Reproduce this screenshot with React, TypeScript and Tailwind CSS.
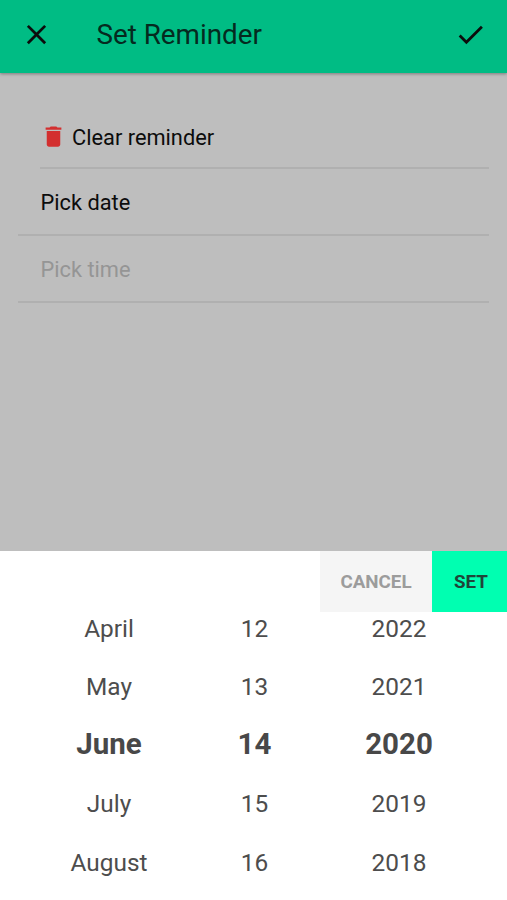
import React from 'react'

interface PickerColumnProps {
  values: string[]
  className: string
}

const SELECTED_INDEX = 2

const months = ['April', 'May', 'June', 'July', 'August']
const days = ['12', '13', '14', '15', '16']
const years = ['2022', '2021', '2020', '2019', '2018']

function PickerColumn({ values, className }: PickerColumnProps) {
  return (
    <ul className={`flex flex-col text-center ${className}`}>
      {values.map((value, index) => (
        <li
          key={value}
          className={
            index === SELECTED_INDEX
              ? 'h-[58.4px] text-[29.5px] leading-[55px] font-bold text-[#484848]'
              : 'h-[58.4px] text-[24.4px] leading-[58px] text-[#4d4d4d]'
          }
        >
          {value}
        </li>
      ))}
    </ul>
  )
}

export default function App() {
  return (
    <div className="flex h-[900px] w-[507px] flex-col overflow-hidden bg-[#bebebe] font-['Roboto',sans-serif] text-[#0c0c0c]">
      {/* Header */}
      <header className="flex h-[73px] shrink-0 items-center bg-[#00bc84] pr-[20px] pl-[20px] pb-[4px] shadow-[0_1px_3px_rgba(0,0,0,0.35)]">
        <button aria-label="Close">
          <svg className="size-[33px]" viewBox="0 0 24 24" fill="currentColor">
            <path d="M19 6.41 17.59 5 12 10.59 6.41 5 5 6.41 10.59 12 5 17.59 6.41 19 12 13.41 17.59 19 19 17.59 13.41 12z" />
          </svg>
        </button>
        <h1 className="ml-[43.5px] flex-1 pt-px text-[27.8px] leading-8 text-[#052a1f]">Set Reminder</h1>
        <button aria-label="Save">
          <svg className="size-[33px]" viewBox="0 0 24 24" fill="currentColor">
            <path d="M9 16.17 4.83 12l-1.42 1.41L9 19 21 7l-1.41-1.41z" />
          </svg>
        </button>
      </header>

      {/* Reminder options */}
      <main className="flex-1 pr-[18px] pl-[18px] pt-[32px] text-[21.8px]">
        <div className="ml-[22px] flex h-[64px] items-center border-b-2 border-[#b0b0b0]">
          <svg className="size-[27px] text-[#d32f2f]" viewBox="0 0 24 24" fill="currentColor">
            <path d="M6 19c0 1.1.9 2 2 2h8c1.1 0 2-.9 2-2V7H6v12zM19 4h-3.5l-1-1h-5l-1 1H5v2h14V4z" />
          </svg>
          <span className="ml-[5px] pt-[5px]">Clear reminder</span>
        </div>
        <div className="flex h-[67px] items-center border-b-2 border-[#b0b0b0] pt-[4px] pl-[22.5px]">Pick date</div>
        <div className="flex h-[67px] items-center border-b-2 border-[#b0b0b0] pt-[4px] pl-[22.5px] text-[#959595]">Pick time</div>
      </main>

      {/* Date picker */}
      <section className="h-[349px] shrink-0 bg-white">
        <div className="flex h-[61px] justify-end text-[18.8px] font-bold">
          <button className="w-[112px] bg-[#f5f5f5] pt-px text-[#9c9c9c]">CANCEL</button>
          <button className="w-[75px] bg-[#00ffb1] pt-px pl-[3px] text-[#1f4639]">SET</button>
        </div>
        <div className="-mt-[12px] flex">
          <PickerColumn values={months} className="ml-[36px] w-[146px]" />
          <PickerColumn values={days} className="w-[145px]" />
          <PickerColumn values={years} className="w-[144px]" />
        </div>
      </section>
    </div>
  )
}
